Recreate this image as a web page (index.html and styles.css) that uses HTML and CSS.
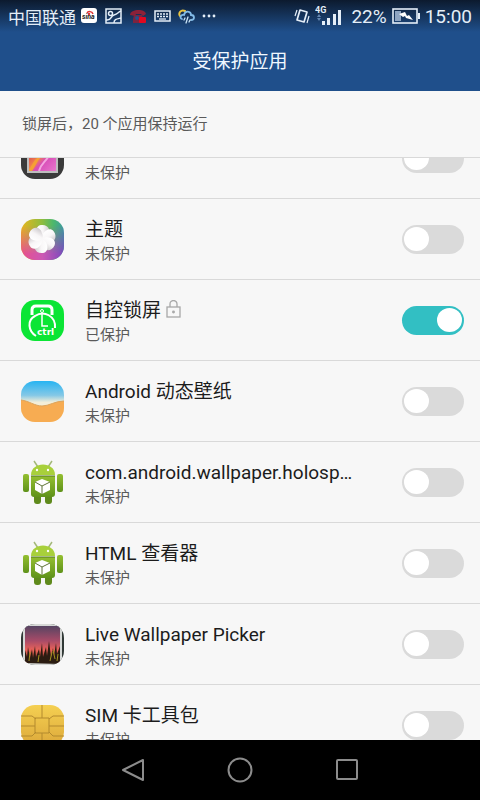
FILE: index.html
```html
<!DOCTYPE html>
<html lang="zh-CN">

<head>
  <meta charset="UTF-8">
  <meta name="viewport" content="width=device-width, initial-scale=1.0">
  <title>受保护应用</title>
  <link rel="stylesheet" href="styles.css">
</head>

<body>
  <header class="top">
    <div class="status-bar">
      <div class="status-left">
        <span class="carrier">中国联通</span>
        <svg width="16" height="16" viewBox="0 0 16 16">
          <rect width="16" height="15" rx="3" fill="#fff" />
          <path d="M6 5c1-2 5-2 6 1" fill="none" stroke="#d33" stroke-width="1.5" />
          <circle cx="8" cy="6" r="1.2" fill="#d33" />
          <text x="1" y="11" class="sina">sina</text>
        </svg>
        <svg class="gap-wide" width="18" height="16" viewBox="0 0 18 16" fill="none" stroke="#e4eef8" stroke-width="1.5">
          <rect x="2" y="1" width="15" height="14" />
          <circle cx="6.5" cy="5.5" r="2" />
          <path d="M2 12c6 1 4-4 8-5s4-3 7-4M10 15c0-4 3-4 7-5" />
        </svg>
        <svg class="gap-wide" width="18" height="16" viewBox="0 0 18 16">
          <path d="M1 7C1 1 16 0 17 6l-3 2-2-2H7L6 8z" fill="#8c2138" />
          <path d="M5 7h8l1 4v4H4v-4z" fill="#7c2440" />
          <circle cx="8" cy="10" r="2" fill="#25508a" />
          <rect x="10" y="9" width="7" height="6" rx="1" fill="#e00920" />
        </svg>
        <svg class="gap-wide" width="17" height="16" viewBox="0 0 17 16" fill="none" stroke="#e4eef8">
          <rect x="1" y="3" width="15" height="10" stroke-width="1.5" />
          <path d="M3 6h11M3 8.5h11" stroke-width="1.4" stroke-dasharray="2 1" />
          <path d="M5 11h7" stroke-width="1.3" />
        </svg>
        <svg class="gap-wide" width="17" height="16" viewBox="0 0 17 16" fill="none" stroke-linecap="round">
          <path d="M2 8C0 5 3 1 7 3" stroke="#e8c340" stroke-width="2" />
          <path d="M4 11C1 10 3 6 6 7c1-5 7-4 7 0 4 0 4 5 0 5" stroke="#83bce8" stroke-width="1.8" />
          <path d="M7 10l-1 2M10 9l-2 6M12 12l-1 2" stroke="#c9e4f7" stroke-width="1.3" />
        </svg>
        <svg class="gap-wide" width="14" height="16" viewBox="0 0 14 16" fill="#e4eef8">
          <circle cx="2" cy="8" r="1.4" />
          <circle cx="7" cy="8" r="1.4" />
          <circle cx="12" cy="8" r="1.4" />
        </svg>
      </div>
      <div class="status-right">
        <svg width="16" height="18" viewBox="0 0 16 18" fill="none" stroke="#e4eef8">
          <path d="M6 3l7 2-3 10-7-2z" stroke-width="1.7" stroke-linejoin="round" />
          <path d="M3 3L1 9M15 9l-2 7" stroke-width="1.2" />
        </svg>
        <svg width="27" height="20" viewBox="0 0 27 20" fill="#e4eef8">
          <text x="0" y="7" class="net">4G</text>
          <path d="M2 11l2-3 2 3zM2 12h4l-2 3z" fill="#6487b1" />
          <path d="M7 15h3v4H7zM12 12h3v7h-3zM18 8h3v11h-3zM23 4h3v15h-3z" />
        </svg>
        <span class="percent">22%</span>
        <svg width="28" height="16" viewBox="0 0 28 16">
          <rect x="1" y="1" width="24" height="14" fill="none" stroke="#e4eef8" stroke-width="1.6" />
          <rect x="3" y="3" width="6" height="10" fill="#8ea5c2" />
          <path d="M26 5h2v6h-2z" fill="#e4eef8" />
          <path d="M7 6l6-2 2 4 2-1 4 5-7-2-1-2-2 1z" fill="#fff" />
        </svg>
        <span class="clock">15:00</span>
      </div>
    </div>
    <h1>受保护应用</h1>
  </header>

  <p class="summary">锁屏后，20 个应用保持运行</p>

  <main class="list-wrap" id="list">
    <ul class="app-list">
      <li class="app">
        <svg class="app-icon" viewBox="0 0 43 41">
          <defs>
            <clipPath id="tile"><rect width="43" height="41" rx="14" /></clipPath>
            <linearGradient id="pink" x2="1" y2="1">
              <stop offset="0" stop-color="#c8204c" />
              <stop offset=".45" stop-color="#f08050" />
              <stop offset=".6" stop-color="#d84cb8" />
              <stop offset="1" stop-color="#e878cc" />
            </linearGradient>
          </defs>
          <g clip-path="url(#tile)">
            <rect width="43" height="41" fill="#3a3a3a" />
            <rect x="6" y="3" width="31" height="32" fill="#bdbdbd" />
            <rect x="8" y="5" width="27" height="28" fill="url(#pink)" />
            <path d="M8 31c4-4 5-12 12-12-4 4-5 9-9 14H8z" fill="#f5a034" />
            <path d="M18 33c2-8 7-9 11-17" stroke="#f3a5df" stroke-width="2" fill="none" />
          </g>
        </svg>
        <label class="info" for="app1">
          <span class="name"></span>
          <span class="state">未保护</span>
        </label>
        <input type="checkbox" class="switch" id="app1">
      </li>
      <li class="app">
        <svg class="app-icon" viewBox="0 0 43 41">
          <defs>
            <linearGradient id="theme" x2="1">
              <stop offset="0" stop-color="#e8b61c" />
              <stop offset=".5" stop-color="#8cbc40" />
              <stop offset=".75" stop-color="#4cb86c" />
              <stop offset="1" stop-color="#3b9ba0" />
            </linearGradient>
            <linearGradient id="theme-low" x2="1">
              <stop offset="0" stop-color="#e8508c" />
              <stop offset=".5" stop-color="#cc58b4" />
              <stop offset="1" stop-color="#7a48bc" />
            </linearGradient>
            <linearGradient id="fade" x2="0" y2="1">
              <stop offset=".15" stop-color="#000" />
              <stop offset=".85" stop-color="#fff" />
            </linearGradient>
            <mask id="lower"><rect width="43" height="41" fill="url(#fade)" /></mask>
            <linearGradient id="petal" x2="1">
              <stop offset="0" stop-color="#fff" />
              <stop offset=".5" stop-color="#f8f6f7" />
              <stop offset="1" stop-color="#cfcbce" />
            </linearGradient>
            <path id="leaf" d="M21 20C15 18 13 7 20 6c8-1 11 7 6 11-1 2-3 3-5 3z" fill="url(#petal)" />
          </defs>
          <g clip-path="url(#tile)">
            <rect width="43" height="41" fill="url(#theme)" />
            <rect width="43" height="41" fill="url(#theme-low)" mask="url(#lower)" />
            <use href="#leaf" />
            <use href="#leaf" transform="rotate(60 21 20)" />
            <use href="#leaf" transform="rotate(120 21 20)" />
            <use href="#leaf" transform="rotate(180 21 20)" />
            <use href="#leaf" transform="rotate(240 21 20)" />
            <use href="#leaf" transform="rotate(300 21 20)" />
          </g>
        </svg>
        <label class="info" for="app2">
          <span class="name">主题</span>
          <span class="state">未保护</span>
        </label>
        <input type="checkbox" class="switch" id="app2">
      </li>
      <li class="app">
        <svg class="app-icon" viewBox="0 0 43 41">
          <rect width="43" height="41" rx="14" fill="#0be535" />
          <g fill="none" stroke="#fff">
            <path d="M11 15V10q0-4 4-4h12q4 0 4 4v5" stroke-width="3" />
            <path d="M15 36C7 31 6 20 14 16c9-6 21 0 20 12" stroke-width="2" />
            <path d="M21 13v13h6" stroke-width="1.5" />
            <circle cx="21" cy="11" r="1.5" />
          </g>
          <text x="16" y="35" class="ctrl">ctrl</text>
        </svg>
        <label class="info" for="app3">
          <span class="name">自控锁屏
            <svg class="lock" width="15" height="18" viewBox="0 0 15 18" fill="none" stroke="#a8a8a8" stroke-width="1.3">
              <rect x="1" y="7" width="13" height="10" />
              <path d="M4 7V4a3.5 3.5 0 0 1 7 0v3" />
              <circle cx="7.5" cy="12" r=".8" fill="#a8a8a8" />
            </svg>
          </span>
          <span class="state">已保护</span>
        </label>
        <input type="checkbox" class="switch" id="app3" checked>
      </li>
      <li class="app">
        <svg class="app-icon" viewBox="0 0 43 41">
          <defs>
            <linearGradient id="sky" x2="0" y2="1">
              <stop offset="0" stop-color="#27b4f2" />
              <stop offset=".35" stop-color="#85c8e6" />
              <stop offset=".52" stop-color="#f3eed8" />
            </linearGradient>
          </defs>
          <g clip-path="url(#tile)">
            <rect width="43" height="41" fill="url(#sky)" />
            <path d="M0 19c8 1 14 6 21 6s13-5 22-5v21H0z" fill="#f7ac52" />
            <path d="M0 19c8 1 14 6 21 6s13-5 22-5" fill="none" stroke="#dca45c" />
          </g>
        </svg>
        <label class="info" for="app4">
          <span class="name">Android 动态壁纸</span>
          <span class="state">未保护</span>
        </label>
        <input type="checkbox" class="switch" id="app4">
      </li>
      <li class="app">
        <svg class="app-icon robot" viewBox="0 0 43 45">
          <defs>
            <linearGradient id="green" x2="0" y2="1">
              <stop offset="0" stop-color="#94bf30" />
              <stop offset="1" stop-color="#5f921a" />
            </linearGradient>
            <g id="android">
              <path d="M13 1l4 6M31 1l-4 6" stroke="#a3b878" stroke-width="1.5" />
              <rect x="13" y="34" width="7" height="10" rx="3" fill="#5f8a1c" />
              <rect x="24" y="34" width="7" height="10" rx="3" fill="#5f8a1c" />
              <rect x="2" y="14" width="6" height="18" rx="2" fill="url(#green)" />
              <rect x="36" y="14" width="6" height="18" rx="2" fill="url(#green)" />
              <path d="M10 16h24v18q0 3-3 3H13q-3 0-3-3z" fill="url(#green)" />
              <path d="M10 15C10 1 34 1 34 15z" fill="#a8d03b" />
              <path d="M10 16h24" stroke="#52791c" />
              <circle cx="16" cy="10" r="1.2" fill="#fff" />
              <circle cx="27" cy="10" r="1.2" fill="#fff" />
              <path d="M14 22l7-3 8 3v8l-8 4-7-4z" fill="#fff" />
              <path d="M14 22l7 4 8-4M21 26v8" fill="none" stroke="#5f7437" />
            </g>
          </defs>
          <use href="#android" />
        </svg>
        <label class="info" for="app5">
          <span class="name">com.android.wallpaper.holosp…</span>
          <span class="state">未保护</span>
        </label>
        <input type="checkbox" class="switch" id="app5">
      </li>
      <li class="app">
        <svg class="app-icon robot" viewBox="0 0 43 45">
          <use href="#android" />
        </svg>
        <label class="info" for="app6">
          <span class="name">HTML 查看器</span>
          <span class="state">未保护</span>
        </label>
        <input type="checkbox" class="switch" id="app6">
      </li>
      <li class="app">
        <svg class="app-icon" viewBox="0 0 43 41">
          <defs>
            <linearGradient id="dusk" x2="0" y2="1">
              <stop offset="0" stop-color="#574462" />
              <stop offset=".4" stop-color="#a84b68" />
              <stop offset=".65" stop-color="#ea6258" />
              <stop offset="1" stop-color="#7c3428" />
            </linearGradient>
          </defs>
          <g clip-path="url(#tile)">
            <rect width="43" height="41" fill="#303936" />
            <rect x="2" width="39" height="41" fill="#d6d8d6" />
            <rect x="4" y="2" width="35" height="37" fill="url(#dusk)" />
            <path d="M4 39V26l2 7 1-10 2 11 2-9 1 9 2-12 1 11 3-8 1 8 2-14 1 14 3-10 1 9 2-15 2 16 2-9 1 8 2-13 1 11 3-8v18z" fill="#2b1c12" />
            <path d="M8 37l1-9M17 38l1-7M29 37l2-9M34 35l-2-9M36 37l1-7" stroke="#a59423" />
          </g>
        </svg>
        <label class="info" for="app7">
          <span class="name">Live Wallpaper Picker</span>
          <span class="state">未保护</span>
        </label>
        <input type="checkbox" class="switch" id="app7">
      </li>
      <li class="app">
        <svg class="app-icon" viewBox="0 0 43 41">
          <defs>
            <linearGradient id="gold" x2="0" y2="1">
              <stop offset="0" stop-color="#f5d052" />
              <stop offset="1" stop-color="#dca83a" />
            </linearGradient>
          </defs>
          <rect width="43" height="41" rx="14" fill="url(#gold)" />
          <path d="M21 0v13M21 28v13M0 11h11l4 3M43 11H32l-4 3M0 21h14M28 21h15M0 31h11l4-4M43 31H32l-4-4M14 13h14v15H14z" fill="none" stroke="#b38a2e" />
        </svg>
        <label class="info" for="app8">
          <span class="name">SIM 卡工具包</span>
          <span class="state">未保护</span>
        </label>
        <input type="checkbox" class="switch" id="app8">
      </li>
    </ul>
  </main>

  <nav class="nav-bar">
    <button aria-label="返回">
      <svg width="24" height="24" viewBox="0 0 24 24"><path d="M22 2v20L2 12z" /></svg>
    </button>
    <button aria-label="主屏幕">
      <svg width="26" height="26" viewBox="0 0 26 26"><circle cx="13" cy="13" r="11.5" /></svg>
    </button>
    <button aria-label="最近任务">
      <svg width="24" height="24" viewBox="0 0 24 24"><rect x="2" y="2" width="20" height="19" rx="1" /></svg>
    </button>
  </nav>

  <script>
    // start a little way down the list
    document.getElementById("list").scrollTop = 40;
  </script>
</body>

</html>
```
FILE: styles.css
```css
* {
  box-sizing: border-box;
}

body {
  margin: 0;
  height: 100vh;
  display: flex;
  flex-direction: column;
  background: #f7f7f7;
  color: #1c1c1c;
  font-family: Roboto, "Noto Sans CJK SC", sans-serif;
}

.top {
  background: linear-gradient(#0c1a2e 0, #1f4f8b 32px);
  color: #f0f8ff;
}

.status-bar {
  height: 32px;
  padding: 0 8px;
  display: flex;
  align-items: center;
  justify-content: space-between;
  color: #e4eef8;
}

.status-left,
.status-right {
  display: flex;
  align-items: center;
}

.status-left {
  gap: 5px;
}

.status-right {
  gap: 5px;
}

.gap-wide {
  margin-left: 2px;
}

.carrier {
  font-size: 17px;
}

.percent,
.clock {
  font-size: 19px;
}

.percent {
  margin-left: 4px;
}

.sina {
  font: italic bold 7px Roboto, sans-serif;
  fill: #222;
}

.net {
  font: bold 9px Roboto, sans-serif;
}

.ctrl {
  font: bold 9px "DejaVu Sans", sans-serif;
  fill: #fff;
}

h1 {
  margin: 0;
  height: 59px;
  line-height: 60px;
  text-align: center;
  font-size: 19px;
  font-weight: 400;
}

.summary {
  margin: 0;
  padding: 0 22px;
  line-height: 66px;
  border-bottom: 1px solid #d9d9d9;
  font-size: 15px;
  color: #5a5a5a;
}

.list-wrap {
  flex: 1;
  min-height: 0;
  overflow-y: auto;
  scrollbar-width: none;
}

.app-list {
  margin: 0;
  padding: 0;
  list-style: none;
}

.app {
  height: 81px;
  padding: 0 16px 0 21px;
  display: flex;
  align-items: center;
  border-bottom: 1px solid #d9d9d9;
}

.app-icon {
  width: 43px;
  height: 41px;
  flex: none;
}

.robot {
  height: 45px;
}

.info {
  flex: 1;
  min-width: 0;
  padding: 3px 0 0 21px;
  display: flex;
  flex-direction: column;
}

.name {
  min-height: 26px;
  font-size: 19px;
  line-height: 26px;
  white-space: nowrap;
}

.lock {
  vertical-align: -1px;
}

.state {
  font-size: 15px;
  line-height: 22px;
  color: #5a5a5a;
}

.switch {
  appearance: none;
  flex: none;
  width: 62px;
  height: 29px;
  margin: 0;
  padding: 2px;
  display: flex;
  align-items: center;
  border-radius: 15px;
  background: #dadada;
  cursor: pointer;
}

.switch::before {
  content: "";
  width: 25px;
  height: 24px;
  border-radius: 50%;
  background: #fff;
}

.switch:checked {
  justify-content: flex-end;
  background: #32bfc3;
}

.nav-bar {
  height: 60px;
  display: flex;
  align-items: center;
  justify-content: center;
  gap: 47px;
  background: #000;
}

.nav-bar button {
  width: 60px;
  height: 60px;
  padding: 0;
  display: flex;
  align-items: center;
  justify-content: center;
  border: none;
  background: none;
  cursor: pointer;
}

.nav-bar svg {
  fill: none;
  stroke: #8c8c8c;
  stroke-width: 2;
  stroke-linejoin: round;
}
```
